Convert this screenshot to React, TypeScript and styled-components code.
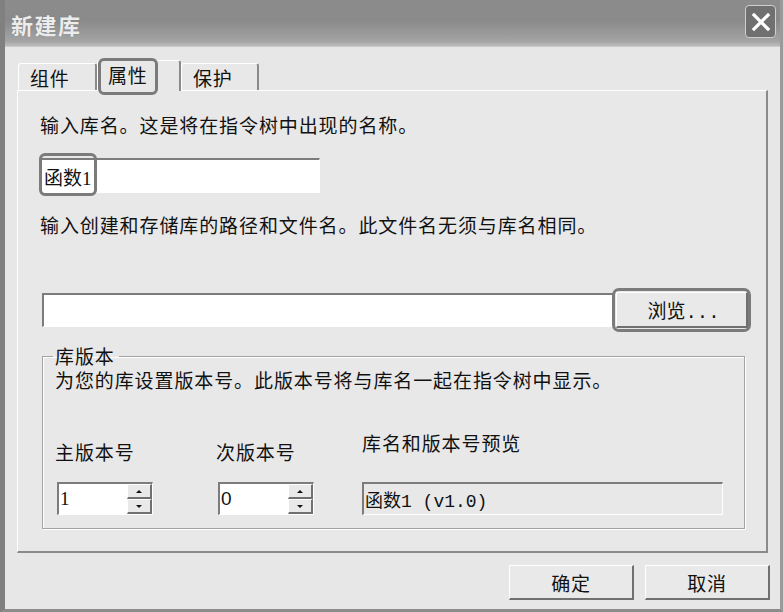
import React, { useState } from "react";
import styled, { createGlobalStyle, css } from "styled-components";

const GlobalStyle = createGlobalStyle`
  html, body {
    margin: 0;
    padding: 0;
    background: #e7e7e7;
  }
  body {
    font-family: "Noto Sans CJK SC", "Noto Sans", sans-serif;
    color: #111;
  }
`;

const Window = styled.div`
  width: 783px;
  height: 612px;
  box-sizing: border-box;
  background: #e7e7e7;
  border-left: 5px solid #808080;
  border-right: 3px solid #9a9a9a;
  border-bottom: 3px solid #8c8c8c;
  display: flex;
  flex-direction: column;
`;

const TitleBar = styled.div`
  height: 47px;
  box-sizing: border-box;
  display: flex;
  align-items: center;
  justify-content: space-between;
  padding: 0 4px 0 6px;
  background: linear-gradient(#8c8c8c 0%, #8a8a8a 45%, #a4a4a4 90%, #bdbdbd 100%);
  border-bottom: 1px solid #c9c9c9;
`;

const Title = styled.div`
  color: #ececec;
  font-size: 22px;
  font-weight: 700;
  letter-spacing: 1.5px;
  margin-top: 2px;
  text-shadow: 0 0 1px #777;
`;

const CloseButton = styled.button`
  width: 31px;
  height: 33px;
  padding: 0;
  display: flex;
  align-items: center;
  justify-content: center;
  background: #707070;
  border: 1px solid #cfcfcf;
  border-radius: 4px;
  margin-bottom: 3px;
`;

const Body = styled.div`
  flex: 1;
  display: flex;
  flex-direction: column;
  padding: 13px 12px 0 12px;
`;

const TabStrip = styled.div`
  display: flex;
  align-items: flex-end;
  padding-left: 1px;
  height: 30px;
`;

const Tab = styled.div<{ $active?: boolean; $width: number }>`
  position: relative;
  width: ${(p) => p.$width}px;
  height: 27px;
  box-sizing: border-box;
  padding: 0 0 0 11px;
  display: flex;
  align-items: center;
  font-size: 19px;
  letter-spacing: 0.8px;
  background: #e8e8e8;
  border-top: 1px solid #fff;
  border-left: 1px solid #fff;
  border-right: 2px solid #8a8a8a;
  border-radius: 3px 3px 0 0;
  cursor: default;
  ${(p) =>
    p.$active &&
    css`
      height: 31px;
      margin-bottom: -1px;
      padding: 0 0 3px 10px;
      z-index: 1;
    `}
`;

const Marked = styled.span<{ $inset: string }>`
  position: relative;
  &::after {
    content: "";
    position: absolute;
    inset: ${(p) => p.$inset};
    border: 3px solid #7b7b7b;
    border-radius: 6px;
    pointer-events: none;
  }
`;

const Panel = styled.div`
  box-sizing: border-box;
  height: 463px;
  padding: 22px 18px 0 22px;
  background: #e8e8e8;
  border-top: 1px solid #fff;
  border-left: 1px solid #fff;
  border-right: 2px solid #8a8a8a;
  border-bottom: 2px solid #8a8a8a;
  display: flex;
  flex-direction: column;
`;

const Text = styled.div<{ $gap?: number }>`
  font-size: 19px;
  line-height: 24px;
  letter-spacing: 0.9px;
  white-space: nowrap;
  margin-top: ${(p) => p.$gap ?? 0}px;
`;

const sunken = css`
  box-sizing: border-box;
  border-top: 2px solid #7c7c7c;
  border-left: 2px solid #7c7c7c;
  border-right: 1px solid #fff;
  border-bottom: 1px solid #fff;
`;

const raised = css`
  box-sizing: border-box;
  background: #e9e9e9;
  border-top: 1px solid #fff;
  border-left: 1px solid #fff;
  border-right: 2px solid #707070;
  border-bottom: 2px solid #707070;
`;

const NameField = styled.div`
  ${sunken};
  width: 280px;
  height: 35px;
  margin-top: 21px;
  background: #fff;
  display: flex;
  align-items: center;
  padding-left: 2px;
  font-size: 19px;
`;

const PathRow = styled.div`
  display: flex;
  align-items: center;
  height: 36px;
  margin-top: 55px;
  padding-left: 2px;
  gap: 1px;
`;

const PathField = styled.div`
  ${sunken};
  flex: 1;
  height: 34px;
  background: #fff;
`;

const Button = styled.button`
  ${raised};
  width: 125px;
  height: 35px;
  padding: 0;
  font-family: "Noto Sans CJK SC", sans-serif;
  font-size: 19px;
  letter-spacing: 0.8px;
  color: #111;
  display: flex;
  align-items: center;
  justify-content: center;
`;

const BrowseButton = styled(Button)`
  position: relative;
  width: 132px;
  height: 36px;
  font-family: "Liberation Mono", "Noto Sans CJK SC", monospace;
  letter-spacing: 0;
  padding-left: 4px;
  &::after {
    content: "";
    position: absolute;
    inset: -5px -5px -6px -5px;
    border: 3px solid #7b7b7b;
    border-radius: 7px;
  }
`;

const Group = styled.fieldset`
  margin: 18px 3px 0 2px;
  padding: 0 10px 13px 12px;
  border: 1px solid #a3a3a3;
  box-shadow: inset 1px 1px 0 #fff, 1px 1px 0 #fff;
  min-width: 0;
`;

const Legend = styled.legend`
  font-size: 19px;
  line-height: 20px;
  letter-spacing: 0.9px;
  padding: 0 4px 0 2px;
  margin-left: -2px;
`;

const VersionGrid = styled.div`
  display: grid;
  grid-template-columns: 161px 146px 361px;
  align-items: end;
  margin-top: 39px;
`;

const Field = styled.div<{ $gap: number }>`
  display: flex;
  flex-direction: column;
  gap: ${(p) => p.$gap}px;
`;

const SpinBox = styled.div`
  ${sunken};
  width: 96px;
  height: 33px;
  margin-left: 2px;
  display: flex;
  background: #fff;
`;

const SpinValue = styled.div<{ $serif?: boolean }>`
  flex: 1;
  display: flex;
  align-items: center;
  padding-left: 1px;
  font-size: 19px;
  font-family: ${(p) => (p.$serif ? '"Liberation Serif", serif' : '"Liberation Sans", sans-serif')};
`;

const SpinButtons = styled.div`
  width: 25px;
  display: flex;
  flex-direction: column;
`;

const SpinArrow = styled.div<{ $down?: boolean }>`
  ${raised};
  flex: 1;
  display: flex;
  align-items: center;
  justify-content: center;
  &::before {
    content: "";
    border-left: 3px solid transparent;
    border-right: 3px solid transparent;
    ${(p) =>
      p.$down
        ? "border-top: 3px solid #111;"
        : "border-bottom: 3px solid #111;"}
  }
`;

const Preview = styled.div`
  ${sunken};
  height: 33px;
  display: flex;
  align-items: center;
  padding-left: 1px;
  background: #e8e8e8;
  font-family: "Liberation Mono", "Noto Sans CJK SC", monospace;
  font-size: 18px;
`;

const Footer = styled.div`
  display: flex;
  justify-content: flex-end;
  gap: 11px;
  margin-top: 12px;
  margin-right: -2px;
`;

const Spinner = ({ value, serif }: { value: string; serif?: boolean }) => (
  <SpinBox>
    <SpinValue $serif={serif}>{value}</SpinValue>
    <SpinButtons>
      <SpinArrow />
      <SpinArrow $down />
    </SpinButtons>
  </SpinBox>
);

const tabs = [
  { label: "组件", width: 79 },
  { label: "属性", width: 84 },
  { label: "保护", width: 78 },
];

const App = () => {
  const [active, setActive] = useState(1);

  return (
    <>
      <GlobalStyle />
      <Window>
        <TitleBar>
          <Title>新建库</Title>
          <CloseButton aria-label="关闭">
            <svg width="20" height="20" viewBox="0 0 20 20">
              <path d="M3 3 L17 17 M17 3 L3 17" stroke="#fff" strokeWidth="3.2" strokeLinecap="square" />
            </svg>
          </CloseButton>
        </TitleBar>
        <Body>
          <TabStrip>
            {tabs.map((t, i) => (
              <Tab key={t.label} $width={t.width} $active={i === active} onClick={() => setActive(i)}>
                {i === active ? <Marked $inset="-3px -10px -7px -10px">{t.label}</Marked> : t.label}
              </Tab>
            ))}
          </TabStrip>
          <Panel>
            <Text>输入库名。这是将在指令树中出现的名称。</Text>
            <NameField>
              <Marked $inset="-10px -5px -6px -5px">函数<span style={{ fontFamily: '"Liberation Serif", serif' }}>1</span></Marked>
            </NameField>
            <Text $gap={20}>输入创建和存储库的路径和文件名。此文件名无须与库名相同。</Text>
            <PathRow>
              <PathField />
              <BrowseButton>浏览...</BrowseButton>
            </PathRow>
            <Group>
              <Legend>库版本</Legend>
              <Text $gap={2}>为您的库设置版本号。此版本号将与库名一起在指令树中显示。</Text>
              <VersionGrid>
                <Field $gap={18}>
                  <Text>主版本号</Text>
                  <Spinner value="1" serif />
                </Field>
                <Field $gap={18}>
                  <Text>次版本号</Text>
                  <Spinner value="0" />
                </Field>
                <Field $gap={27}>
                  <Text>库名和版本号预览</Text>
                  <Preview>函数1 (v1.0)</Preview>
                </Field>
              </VersionGrid>
            </Group>
          </Panel>
          <Footer>
            <Button>确定</Button>
            <Button>取消</Button>
          </Footer>
        </Body>
      </Window>
    </>
  );
};

export default App;
